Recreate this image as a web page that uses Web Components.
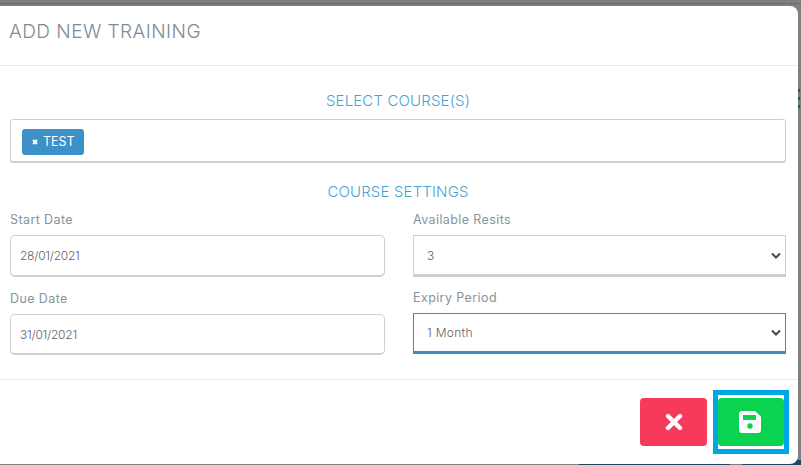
<!DOCTYPE html>
<html lang="en">

<head>
    <meta charset="UTF-8">
    <title>Add new training</title>
    <style>
        html,
        body {
            margin: 0;
            height: 465px;
            overflow: hidden;
            background: #7f7f7f;
            font-family: "Inter", "Liberation Sans", sans-serif;
        }
    </style>
</head>

<body>
    <template id="training-modal">
        <style>
            :host {
                display: block;
                position: relative;
                box-sizing: border-box;
                height: 465px;
                padding: 6px 3px 1px 0;
                background:
                    linear-gradient(to right, #7f7f7f 579px, #1c4a63 579px, #1c4a63 730px, #7f7f7f 730px, #7f7f7f 742px, #1c4a63 742px) bottom / 100% 5px no-repeat,
                    linear-gradient(#7f7f7f 3px, #6b6b6b 3px, #6b6b6b 4px, #7f7f7f 4px);
            }

            .box {
                box-sizing: border-box;
                background: #fff;
                border-radius: 0 8px 8px 0;
                height: 100%;
                display: flex;
                flex-direction: column;
            }

            header {
                box-sizing: border-box;
                height: 60px;
                padding: 0 0 8px 9px;
                display: flex;
                align-items: center;
                border-bottom: 1px solid #e9ecef;
                color: #7d8b94;
                font-size: 19px;
                font-weight: 300;
                letter-spacing: .45px;
            }

            main {
                flex: 1;
                padding: 0 12px 0 10px;
            }

            footer {
                box-sizing: border-box;
                height: 85px;
                border-top: 1px solid #e9ecef;
                display: flex;
                justify-content: flex-end;
                gap: 11px;
                padding: 18px 14px 0 0;
            }

            .dots {
                position: absolute;
                right: 1px;
                top: 89px;
                display: grid;
                row-gap: 5px;
            }

            .dots i {
                width: 2px;
                height: 3px;
                background: #0b6b3c;
            }
        </style>
        <div class="box">
            <header><slot name="title"></slot></header>
            <main><slot></slot></main>
            <footer><slot name="actions"></slot></footer>
        </div>
        <div class="dots"><i></i><i></i><i></i></div>
    </template>

    <template id="section-title">
        <style>
            :host {
                display: block;
                text-align: center;
                color: #4b9fd0;
                font-size: 15px;
                font-weight: 300;
                line-height: 18px;
                letter-spacing: .15px;
            }
        </style>
        <slot></slot>
    </template>

    <template id="tag-box">
        <style>
            :host {
                display: flex;
                box-sizing: border-box;
                height: 44px;
                align-items: flex-start;
                padding: 9px 11px;
                border: 1px solid #cfcfcf;
                border-bottom-width: 2px;
                border-radius: 3px;
            }

            .tag {
                display: flex;
                align-items: center;
                box-sizing: border-box;
                width: 62px;
                height: 26px;
                padding: 0 0 1px 10px;
                gap: 5px;
                border-radius: 3px;
                background: #3b91c8;
                color: #fff;
                font-size: 12.5px;
            }

            svg {
                width: 6px;
                height: 6px;
            }
        </style>
        <span class="tag">
            <svg viewBox="0 0 6 6"><path d="M1 1l4 4M5 1L1 5" stroke="#fff" stroke-width="1.9" fill="none" /></svg>
            <slot></slot>
        </span>
    </template>

    <template id="form-field">
        <style>
            :host {
                display: block;
            }

            label {
                display: block;
                color: #87939b;
                font-size: 12.5px;
                line-height: 16px;
                letter-spacing: .4px;
                height: 23px;
            }

            .control {
                display: flex;
                align-items: center;
                justify-content: space-between;
                box-sizing: border-box;
                height: var(--h, 42px);
                padding: 0 9px;
                border: 1px solid #cfcfcf;
                border-bottom-width: 2px;
                border-radius: 5px;
                color: #5f6468;
                font-size: 12px;
                font-weight: 300;
                letter-spacing: -.25px;
            }

            :host([kind="select"]) .control {
                border-radius: 0;
                padding: 0 4px 0 13px;
                border-width: 1px 1px 3px;
                letter-spacing: .3px;
            }

            :host([focused]) {
                margin-top: -1px;
            }

            :host([focused]) .control {
                border-color: #3b8fc0;
            }

            svg {
                display: none;
                width: 10px;
                height: 7px;
            }

            :host([kind="select"]) svg {
                display: block;
            }
        </style>
        <label></label>
        <div class="control">
            <slot></slot>
            <svg viewBox="0 0 10 7"><path d="M1 1.5l4 4 4-4" stroke="#444b50" stroke-width="2" fill="none" /></svg>
        </div>
    </template>

    <template id="icon-button">
        <style>
            :host {
                display: block;
                width: 67px;
                height: 48px;
            }

            .btn {
                display: flex;
                align-items: center;
                justify-content: center;
                height: 100%;
                border-radius: 4px;
                background: var(--bg);
            }

            :host([highlight]) {
                position: relative;
                width: 66px;
            }

            :host([highlight])::after {
                content: "";
                position: absolute;
                left: -5px;
                right: -5px;
                top: -8px;
                bottom: -8px;
                border: 5px solid #00a6e8;
                box-sizing: border-box;
            }
        </style>
        <div class="btn"><slot></slot></div>
    </template>

    <training-modal>
        <span slot="title">ADD NEW TRAINING</span>

        <section-title style="padding-top:26px;margin-bottom:9px">SELECT COURSE(S)</section-title>
        <tag-box>TEST</tag-box>
        <section-title style="margin-top:20px;margin-bottom:11px">COURSE SETTINGS</section-title>
        <div style="display:grid;grid-template-columns:375px 373px;column-gap:28px;row-gap:14px">
            <form-field label="Start Date">28/01/2021</form-field>
            <form-field label="Available Resits" kind="select">3</form-field>
            <form-field label="Due Date" style="--h:41px">31/01/2021</form-field>
            <form-field label="Expiry Period" kind="select" focused style="--h:41px">1 Month</form-field>
        </div>

        <icon-button slot="actions" style="--bg:#f73a5c">
            <svg width="18" height="18" viewBox="0 0 18 18"><path d="M3 3l12 12M15 3L3 15" stroke="#fff" stroke-width="4.4" stroke-linecap="round" fill="none" /></svg>
        </icon-button>
        <icon-button slot="actions" style="--bg:#0bd350" highlight>
            <svg style="margin-right:3px" width="22" height="22" viewBox="0 0 22 22"><path fill="#fff" fill-rule="evenodd" d="M3 0h13.2L22 5.8V19a3 3 0 0 1-3 3H3a3 3 0 0 1-3-3V3a3 3 0 0 1 3-3zM4 4v5h13V4zM11 12.3a2.7 2.7 0 1 0 0 5.4 2.7 2.7 0 0 0 0-5.4z" /></svg>
        </icon-button>
    </training-modal>

    <script>
        const define = (name, extra) => {
            const template = document.querySelector("#" + name);
            customElements.define(name, class extends HTMLElement {
                constructor() {
                    super().attachShadow({ mode: "open" }).append(template.content.cloneNode(true));
                    if (extra) extra(this);
                }
            });
        };

        define("training-modal");
        define("section-title");
        define("tag-box");
        define("form-field", el => {
            el.shadowRoot.querySelector("label").textContent = el.getAttribute("label");
        });
        define("icon-button");
    </script>
</body>

</html>
